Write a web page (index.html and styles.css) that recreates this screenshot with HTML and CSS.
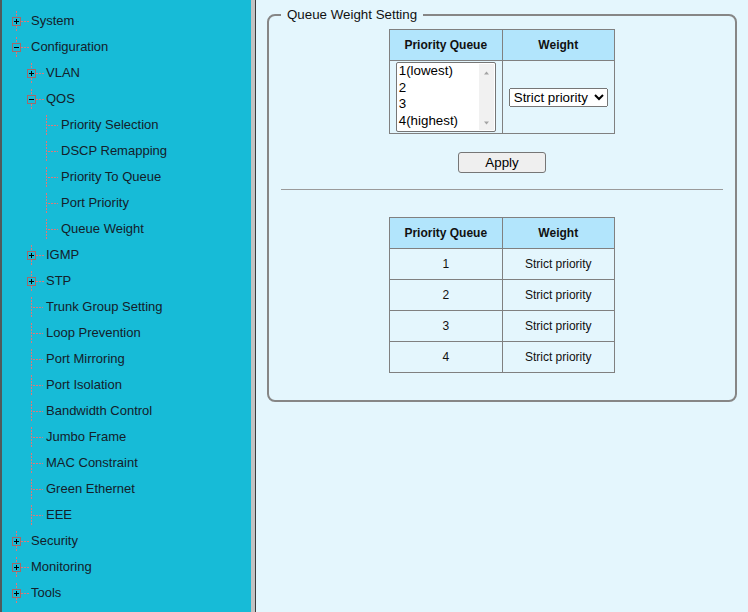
FILE: index.html
```html
<!DOCTYPE html>
<html>
<head>
<meta charset="utf-8">
<link rel="stylesheet" href="styles.css">
</head>
<body>
<div class="layout">
  <nav class="sidebar">
    <div class="row l1"><span class="ico node"><span class="tog"><svg width="7" height="7"><rect x="1" y="3" width="5" height="1"/><rect x="3" y="1" width="1" height="5"/></svg></span></span><span class="label">System</span></div>
    <div class="row l1"><span class="ico node"><span class="tog"><svg width="7" height="7"><rect x="1" y="3" width="5" height="1"/></svg></span></span><span class="label">Configuration</span></div>
    <div class="row l2"><span class="ico node"><span class="tog"><svg width="7" height="7"><rect x="1" y="3" width="5" height="1"/><rect x="3" y="1" width="1" height="5"/></svg></span></span><span class="label">VLAN</span></div>
    <div class="row l2"><span class="ico node"><span class="tog"><svg width="7" height="7"><rect x="1" y="3" width="5" height="1"/></svg></span></span><span class="label">QOS</span></div>
    <div class="row l3"><span class="ico leaf"></span><span class="label">Priority Selection</span></div>
    <div class="row l3"><span class="ico leaf"></span><span class="label">DSCP Remapping</span></div>
    <div class="row l3"><span class="ico leaf"></span><span class="label">Priority To Queue</span></div>
    <div class="row l3"><span class="ico leaf"></span><span class="label">Port Priority</span></div>
    <div class="row l3"><span class="ico leaf"></span><span class="label">Queue Weight</span></div>
    <div class="row l2"><span class="ico node"><span class="tog"><svg width="7" height="7"><rect x="1" y="3" width="5" height="1"/><rect x="3" y="1" width="1" height="5"/></svg></span></span><span class="label">IGMP</span></div>
    <div class="row l2"><span class="ico node"><span class="tog"><svg width="7" height="7"><rect x="1" y="3" width="5" height="1"/><rect x="3" y="1" width="1" height="5"/></svg></span></span><span class="label">STP</span></div>
    <div class="row l2"><span class="ico leaf"></span><span class="label">Trunk Group Setting</span></div>
    <div class="row l2"><span class="ico leaf"></span><span class="label">Loop Prevention</span></div>
    <div class="row l2"><span class="ico leaf"></span><span class="label">Port Mirroring</span></div>
    <div class="row l2"><span class="ico leaf"></span><span class="label">Port Isolation</span></div>
    <div class="row l2"><span class="ico leaf"></span><span class="label">Bandwidth Control</span></div>
    <div class="row l2"><span class="ico leaf"></span><span class="label">Jumbo Frame</span></div>
    <div class="row l2"><span class="ico leaf"></span><span class="label">MAC Constraint</span></div>
    <div class="row l2"><span class="ico leaf"></span><span class="label">Green Ethernet</span></div>
    <div class="row l2"><span class="ico leaf"></span><span class="label">EEE</span></div>
    <div class="row l1"><span class="ico node"><span class="tog"><svg width="7" height="7"><rect x="1" y="3" width="5" height="1"/><rect x="3" y="1" width="1" height="5"/></svg></span></span><span class="label">Security</span></div>
    <div class="row l1"><span class="ico node"><span class="tog"><svg width="7" height="7"><rect x="1" y="3" width="5" height="1"/><rect x="3" y="1" width="1" height="5"/></svg></span></span><span class="label">Monitoring</span></div>
    <div class="row l1"><span class="ico node"><span class="tog"><svg width="7" height="7"><rect x="1" y="3" width="5" height="1"/><rect x="3" y="1" width="1" height="5"/></svg></span></span><span class="label">Tools</span></div>
  </nav>
  <div class="divider"></div>
  <main class="content">
    <fieldset class="box">
      <legend class="box-title">Queue Weight Setting</legend>
      <table class="grid">
        <tr><th>Priority Queue</th><th>Weight</th></tr>
        <tr class="form-row">
          <td>
            <div class="listbox">
              <div class="options">
                <div class="opt">1(lowest)</div>
                <div class="opt">2</div>
                <div class="opt">3</div>
                <div class="opt">4(highest)</div>
              </div>
              <div class="scroll">
                <svg width="15" height="67"><path d="M5 10.5 L7.5 7.5 L10 10.5 Z" fill="#a3a3a3"/><path d="M5 57.5 L7.5 60.5 L10 57.5 Z" fill="#a3a3a3"/></svg>
              </div>
            </div>
          </td>
          <td>
            <select class="weight"><option>Strict priority</option></select>
          </td>
        </tr>
      </table>
      <div class="actions"><button class="apply">Apply</button></div>
      <hr class="sep">
      <table class="grid list">
        <tr><th>Priority Queue</th><th>Weight</th></tr>
        <tr><td>1</td><td>Strict priority</td></tr>
        <tr><td>2</td><td>Strict priority</td></tr>
        <tr><td>3</td><td>Strict priority</td></tr>
        <tr><td>4</td><td>Strict priority</td></tr>
      </table>
    </fieldset>
  </main>
</div>
</body>
</html>
```

FILE: styles.css
```css
html, body {
  margin: 0;
  padding: 0;
  height: 612px;
  overflow: hidden;
}
body {
  font-family: "Liberation Sans", Arial, sans-serif;
  color: #111;
}
.layout {
  display: flex;
  height: 612px;
}
.sidebar {
  width: 249px;
  flex: none;
  background: #17bbd7;
  border-left: 2px solid #4f5a5c;
  padding-top: 8px;
  box-sizing: content-box;
}
.row {
  display: flex;
  align-items: center;
  height: 26px;
  font-size: 13px;
  color: #14202a;
}
.label {
  line-height: 26px;
  white-space: nowrap;
}
.ico {
  position: relative;
  display: block;
  flex: none;
  width: 23px;
  height: 26px;
}
.ico::before {
  content: "";
  position: absolute;
  left: 8px;
  top: 3px;
  width: 1px;
  height: 21px;
  background: repeating-linear-gradient(to bottom, #e07878 0 2px, transparent 2px 3px);
}
.ico::after {
  content: "";
  position: absolute;
  top: 13px;
  height: 1px;
  background: repeating-linear-gradient(to right, #e07878 0 2px, transparent 2px 3px);
}
.node::after {
  left: 13px;
  width: 9px;
}
.leaf::after {
  left: 10px;
  width: 10px;
}
.tog {
  position: absolute;
  left: 4px;
  top: 9px;
  width: 7px;
  height: 7px;
  border: 1px solid #a06a6a;
  background: #17bbd7;
  z-index: 1;
}
.tog svg {
  display: block;
  fill: #000;
}
.l1 { padding-left: 6px; }
.l2 { padding-left: 21px; }
.l3 { padding-left: 36px; }
.divider {
  width: 4px;
  flex: none;
  background: #c2c2c2;
  border-right: 1px solid #3a3a3a;
}
.content {
  flex: 1;
  background: #e4f6fd;
  padding: 7px 11px 0;
}
.box {
  margin: 0;
  border: 2px solid #868686;
  border-radius: 8px;
  padding: 6px 12px 27px;
}
.box-title {
  padding: 0 6px;
  font-size: 13.333px;
  line-height: 16px;
  color: #111;
}
.grid {
  border-collapse: collapse;
  margin: 0 auto;
  width: 226px;
  table-layout: fixed;
}
.grid th, .grid td {
  border: 1px solid #808080;
  padding: 0;
  text-align: center;
  font-size: 12px;
  color: #111;
  height: 30px;
}
.grid th {
  background: #b2e5fc;
  font-weight: bold;
}
.form-row td {
  height: 72px;
}
.listbox {
  display: flex;
  width: 100px;
  height: 70px;
  box-sizing: border-box;
  border: 1px solid #767676;
  border-radius: 2px;
  background: #fff;
  margin: 0 auto;
  text-align: left;
}
.options {
  flex: 1;
  padding-left: 2px;
}
.opt {
  font-size: 13.333px;
  line-height: 16.67px;
  height: 16.67px;
  color: #000;
}
.scroll {
  width: 15px;
  margin: 1px 1px 0 0;
  background: #f1f1f1;
  height: 66px;
}
.scroll svg { display: block; }
.weight {
  font-family: "Liberation Sans", Arial, sans-serif;
  font-size: 13.333px;
  color: #000;
  width: 99px;
  height: 19px;
}
.actions {
  text-align: center;
  margin-top: 18px;
  line-height: 0;
}
.apply {
  width: 88px;
  height: 21px;
  font-family: "Liberation Sans", Arial, sans-serif;
  font-size: 13.333px;
  color: #000;
  background: #efefef;
  border: 1px solid #767676;
  border-radius: 3px;
  padding: 0;
}
.sep {
  border: none;
  border-top: 1px solid #9a9a9a;
  margin: 16px 0 27px;
  height: 0;
}
```
